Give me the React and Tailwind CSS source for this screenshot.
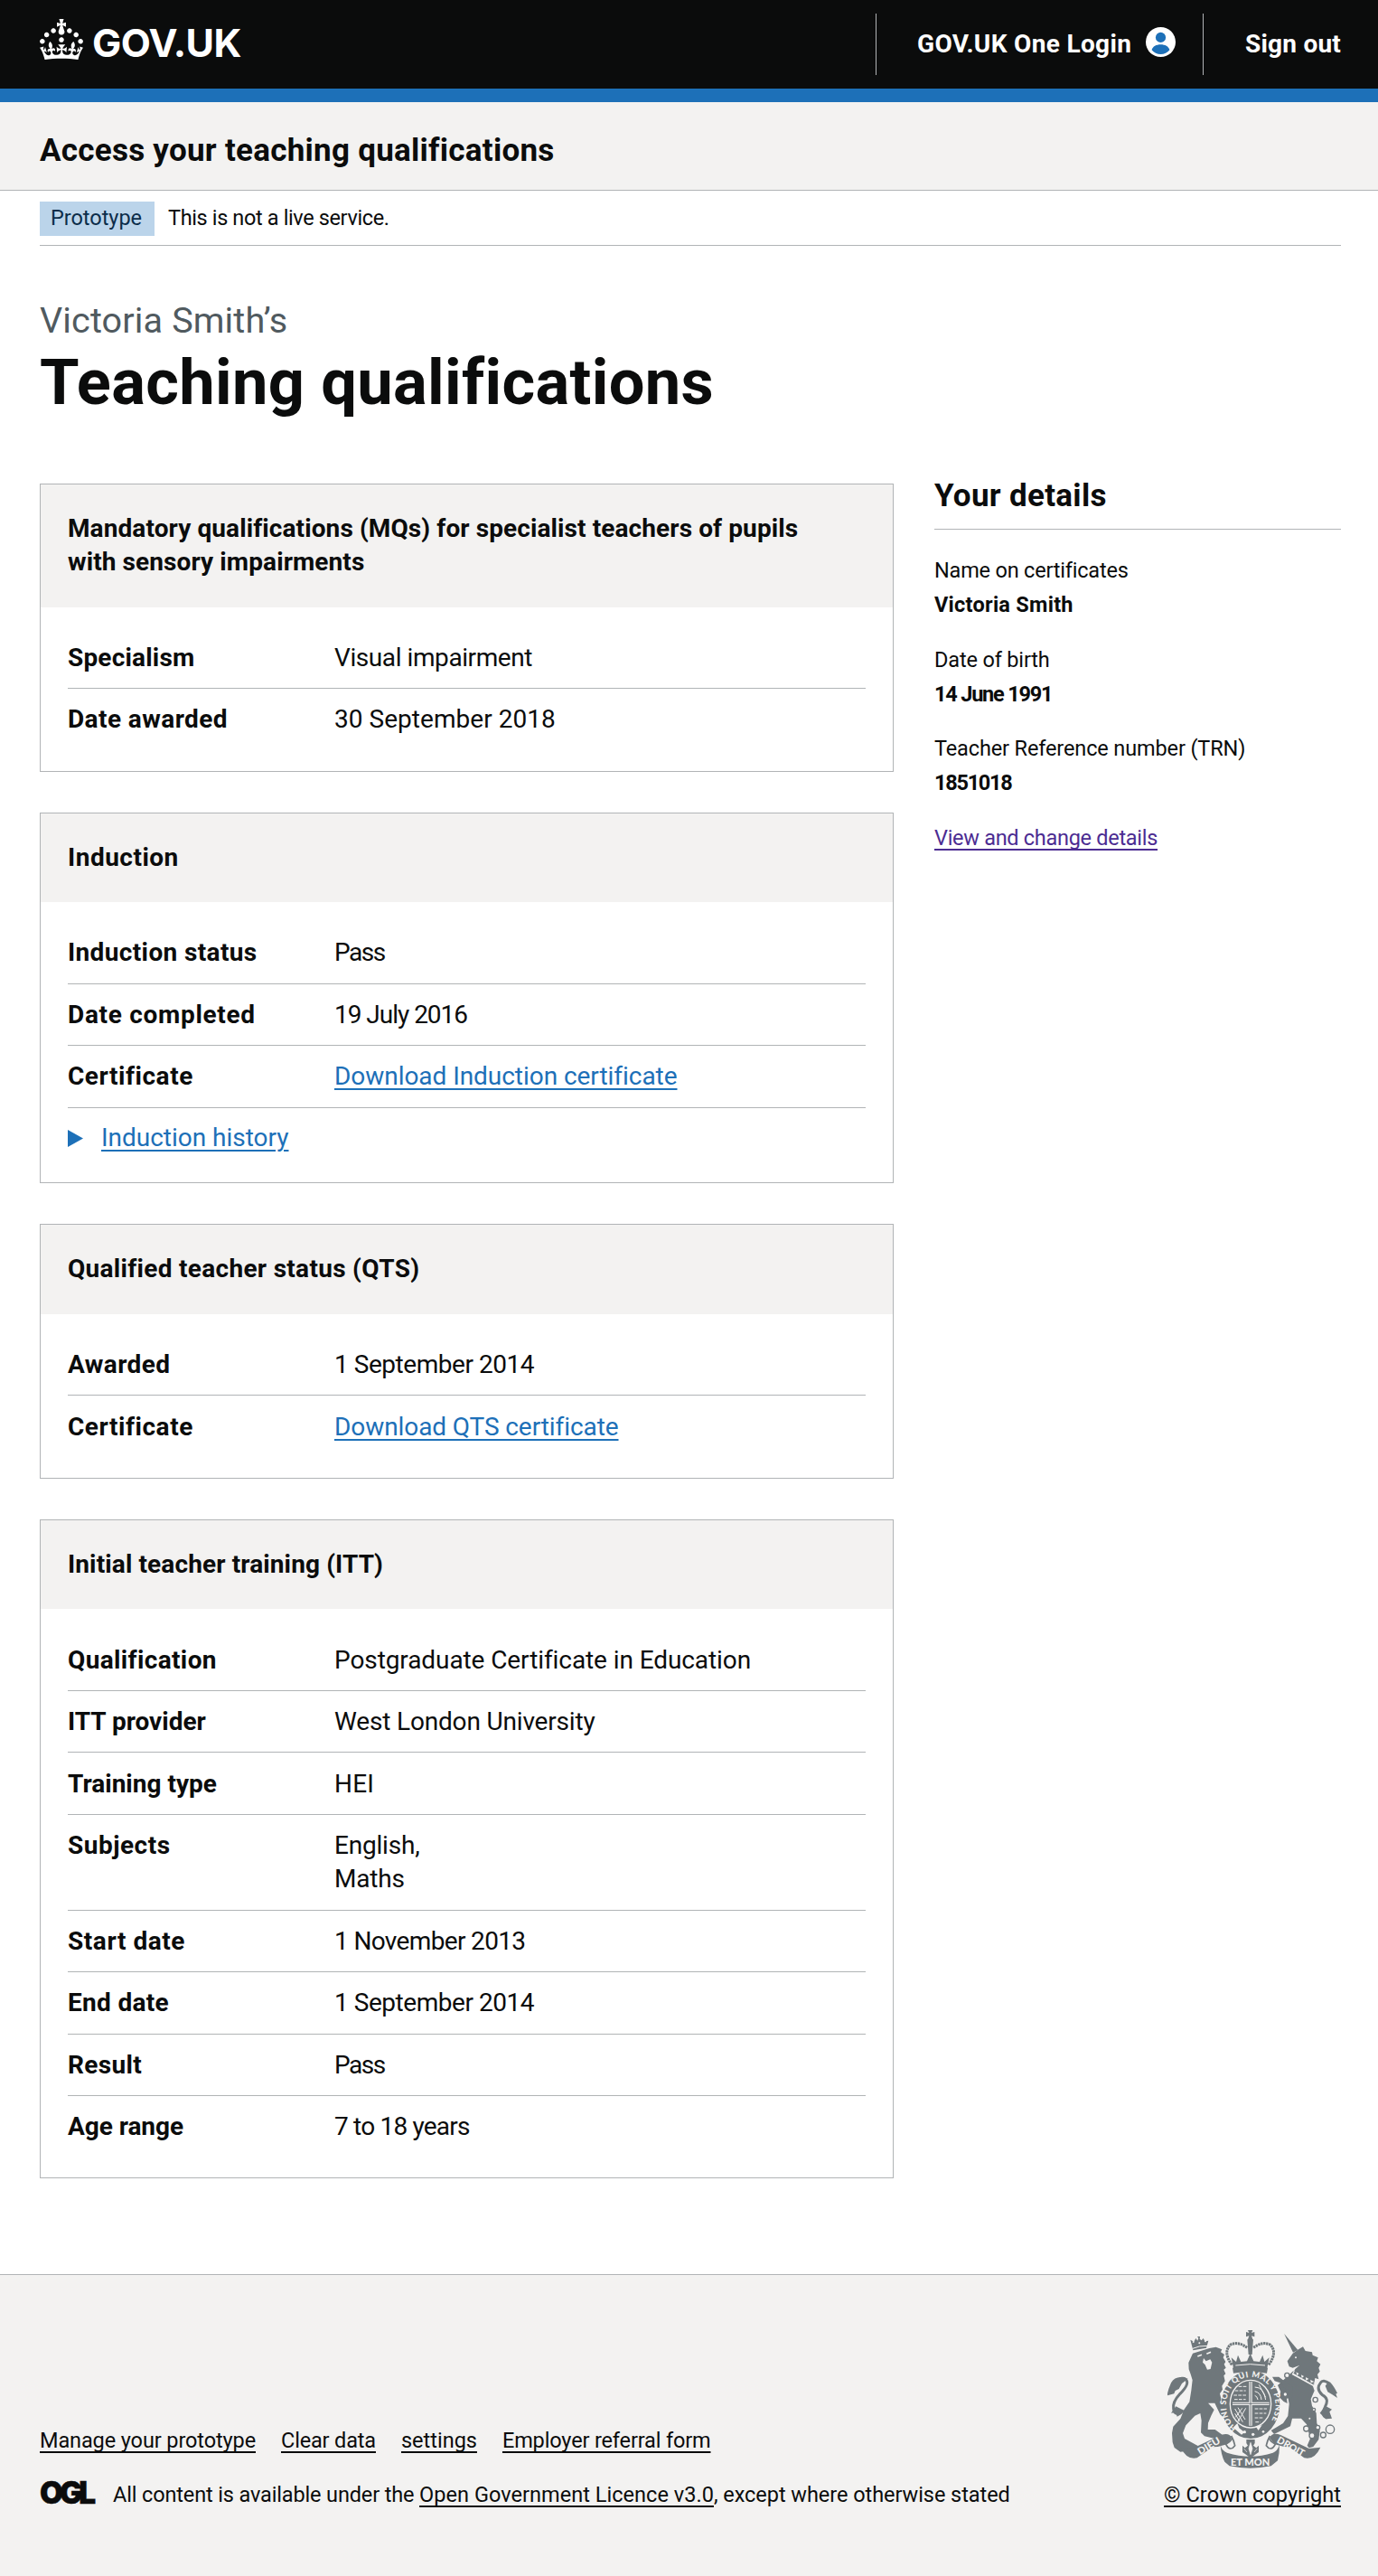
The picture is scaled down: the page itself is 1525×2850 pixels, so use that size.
const LINK = 'text-[#1d70b8] underline decoration-2 underline-offset-[4px]';
const FOOT_LINK = 'underline decoration-2 underline-offset-[4px] [text-decoration-skip-ink:none]';

const CARDS = [
  {
    title: (
      <>
        <span className="tracking-[0.1px]">Mandatory qualifications (MQs) for specialist teachers of pupils</span>
        <br />
        <span className="tracking-[0.1px]">with sensory impairments</span>
      </>
    ),
    rows: [
      ['Specialism', 'tracking-[0.19px]', 'Visual impairment', 'tracking-[-0.42px]'],
      ['Date awarded', 'tracking-[0.42px]', '30 September 2018', 'tracking-[0.04px]'],
    ],
  },
  {
    title: <span className="tracking-[0.5px]">Induction</span>,
    rows: [
      ['Induction status', 'tracking-[0.37px]', 'Pass', 'tracking-[-1.5px]'],
      ['Date completed', 'tracking-[0.7px]', '19 July 2016', 'tracking-[-1.02px]'],
      ['Certificate', 'tracking-[0.54px]', 'Download Induction certificate', 'tracking-[-0.05px]', true],
    ],
    history: true,
  },
  {
    title: <span className="tracking-[0.3px]">Qualified teacher status (QTS)</span>,
    rows: [
      ['Awarded', 'tracking-[0.42px]', '1 September 2014', 'tracking-[-0.46px]'],
      ['Certificate', 'tracking-[0.54px]', 'Download QTS certificate', 'tracking-[-0.08px]', true],
    ],
  },
  {
    title: <span className="tracking-[0.12px]">Initial teacher training (ITT)</span>,
    rows: [
      ['Qualification', 'tracking-[0.36px]', 'Postgraduate Certificate in Education', 'tracking-[-0.09px]'],
      ['ITT provider', 'tracking-[0px]', 'West London University', 'tracking-[-0.17px]'],
      ['Training type', 'tracking-[0.01px]', 'HEI', 'tracking-[0.17px]'],
      ['Subjects', 'tracking-[0.5px]', 'English,\nMaths', 'tracking-[-0.2px]'],
      ['Start date', 'tracking-[0.56px]', '1 November 2013', 'tracking-[-0.65px]'],
      ['End date', 'tracking-[0.31px]', '1 September 2014', 'tracking-[-0.46px]'],
      ['Result', 'tracking-[0.33px]', 'Pass', 'tracking-[-1.5px]'],
      ['Age range', 'tracking-[-0.05px]', '7 to 18 years', 'tracking-[-0.8px]'],
    ],
  },
];

const DETAILS = [
  ['Name on certificates', 'tracking-[-0.2px]', 'Victoria Smith', 'tracking-[0.26px]'],
  ['Date of birth', 'tracking-[-0.16px]', '14 June 1991', 'tracking-[-1.2px]'],
  ['Teacher Reference number (TRN)', 'tracking-[-0.13px]', '1851018', 'tracking-[-1.27px]'],
];

function Crown() {
  return (
    <svg viewBox="0 0 32 30" className="h-[45px] w-12 shrink-0" fill="currentColor">
      <path d="M22.6 10.4c-1 .4-2-.1-2.4-1-.4-.9.1-2 1-2.4.9-.4 2 .1 2.4 1s-.1 2-1 2.4m-5.9 6.7c-.9.4-2-.1-2.4-1-.4-.9.1-2 1-2.4.9-.4 2 .1 2.4 1s-.1 2-1 2.4m10.8-3.7c-1 .4-2-.1-2.4-1-.4-.9.1-2 1-2.4.9-.4 2 .1 2.4 1s0 2-1 2.4m3.3 4.8c-1 .4-2-.1-2.4-1-.4-.9.1-2 1-2.4.9-.4 2 .1 2.4 1s-.1 2-1 2.4M17 4.7l2.3 1.2V2.5l-2.3.7-.2-.2.9-3h-3.4l.9 3-.2.2c-.1.1-2.3-.7-2.3-.7v3.4L15 4.7c.1.1.1.2.2.2l-1.3 4c-.1.2-.1.4-.1.6 0 1.1.8 2 1.9 2.2h.7c1-.2 1.9-1.1 1.9-2.1 0-.2 0-.4-.1-.6l-1.3-4c-.1-.2 0-.2.1-.3m-7.6 5.7c.9.4 2-.1 2.4-1 .4-.9-.1-2-1-2.4-.9-.4-2 .1-2.4 1s0 2 1 2.4m-5 3c.9.4 2-.1 2.4-1 .4-.9-.1-2-1-2.4-.9-.4-2 .1-2.4 1s.1 2 1 2.4m-3.2 4.8c.9.4 2-.1 2.4-1 .4-.9-.1-2-1-2.4-.9-.4-2 .1-2.4 1s0 2 1 2.4m14.8 11c4.4 0 8.6.3 12.3.8 1.1-4.5 2.4-7 3.7-8.8l-2.5-.9c.2 1.3.3 1.9 0 2.7-.4-.4-.8-1.1-1.1-2.3l-1.2 4c.7-.5 1.3-.8 2-.9-1.1 2.5-2.6 3.1-3.5 3-1.1-.2-1.7-1.2-1.5-2.1.3-1.2 1.5-1.5 2.1-.1 1.1-2.3-.8-3-2-2.3 1.9-1.9 2.1-3.5.6-5.6-2.1 1.6-2.1 3.2-1.2 5.5-1.2-1.4-3.2-.6-2.5 1.6.9-1.4 2.1-.5 1.9.8-.2 1.1-1.7 2.1-3.5 1.9-2.7-.2-2.9-2.1-2.9-3.6.7-.1 1.9.5 2.9 1.9l.4-4.3c-1.1 1.1-2.1 1.4-3.2 1.4.4-1.2 2.1-3 2.1-3h-5.4s1.7 1.9 2.1 3c-1.1 0-2.1-.2-3.2-1.4l.4 4.3c1-1.4 2.2-2 2.9-1.9-.1 1.5-.2 3.4-2.9 3.6-1.9.2-3.4-.8-3.5-1.9-.2-1.3 1-2.2 1.9-.8.7-2.3-1.2-3-2.5-1.6.9-2.2.9-3.9-1.2-5.5-1.5 2-1.3 3.7.6 5.6-1.2-.7-3.1 0-2 2.3.6-1.4 1.8-1.1 2.1.1.2.9-.3 1.9-1.5 2.1-.9.2-2.4-.5-3.5-3 .6 0 1.2.3 2 .9l-1.2-4c-.3 1.1-.7 1.9-1.1 2.3-.3-.8-.2-1.4 0-2.7l-2.9.9C1.3 23 2.6 25.5 3.7 30c3.7-.5 7.9-.8 12.3-.8" />
    </svg>
  );
}

function UserIcon() {
  return (
    <svg viewBox="0 0 33 33" className="size-[33px] shrink-0">
      <circle cx="16.5" cy="16.5" r="16.5" fill="#fff" />
      <circle cx="16.5" cy="11.4" r="5.6" fill="#1d70b8" />
      <path d="M6.6 25.2c1.2-3.8 4.9-5.9 9.9-5.9s8.700 2.100 9.900 5.900c-2.500 3-5.900 4.700-9.900 4.700s-7.400-1.700-9.900-4.700z" fill="#1d70b8" />
    </svg>
  );
}

function RoyalArms() {
  const bg = '#f3f2f1';
  const ink = '#6f777b';
  return (
    <svg viewBox="66 81 564 459" className="h-[153px] w-[188px]" fill={ink} fontFamily="Lato, sans-serif" fontWeight="900">
      {/* lion */}
      <path d="M142 113l12 6 6-11 6 8 3-9-4-5 9 0-1 8 6 5 6-7 5 10 12-2-7 24-44 8z" />
      <path d="M150 158l55-17 22-4 20 8-4 9 12 8-4 10 8 14-5 8 6 12-7 6 6 14-6 6 4 18-10 16 2 12-9 14 4 16 2 22 17 25-8 18-14-12-18-38-22 0 20 22-10 20-10 24-1 22 24 0 30 22-3 10-28-2-34-8-12-12 2-40-4-24-18 8-30 32-10 26 6 18 22 12 22 12-8 22-20-6-30 4-20-14-6-18-2-30 4-22 24-26 12-30 18-26 6-38 4-34-6-20-6-16-1-22z" />
      <path d="M118 348q-28 22-32-6-4-22 22-50 32-32 20-46-10-14-36 8" fill="none" stroke={ink} strokeWidth="9" />
      <path d="M134 242q-40-14-56 14l-8 20-6 22 24-6 4-10 12-6 10-18zM94 334l-16 22 16-2 4 14 14-8 10-12z" />
      <path d="M166 168l14-5M196 160l14-6" stroke={bg} strokeWidth="5" />
      <path d="M186 174l8 10 14-6 6 10-5 22-11 2-7-16-8-8z" fill={bg} />
      <circle cx="152" cy="120" r="3" fill={bg} /><circle cx="172" cy="124" r="3" fill={bg} /><circle cx="192" cy="118" r="3" fill={bg} />
      <path d="M150 142q20-10 50-9" stroke={bg} strokeWidth="3" fill="none" />
      {/* unicorn */}
      <path d="M453 92l46 55-16 8z" />
      <path d="M464 184l18-26 20-14 14-8 8 14 22 4 2 10 18 8-4 12 12 10-6 12 4 12-8 10 4 16-12-4-4 24-54-28-14-14 6-12 14-12-22 8-12-4z" />
      <path d="M484 216l62 42 8 24-12 28 4 22 14 24 2 34 10 24-4 30-18 24-14 4-6-8 10-24-12-46-18-20-30 0-6 26-54 26-10-12 40-24 16-24 4-40-4-22-22-14-12-26z" />
      <path d="M480 268l-26-18-18-14-22 0 8 14 18 6 20 22-18 8-6 16 16 16 12 6-2-16 20-4z" />
      <path d="M596 372q-22-6-6-38 14-26-10-38-22-20-6-40 8-14 30 2 10 10 22 34" fill="none" stroke={ink} strokeWidth="9" />
      <path d="M600 252l18 22 12 32-18-12-14-8-8-20zM590 332l22 12-8 8 8 22-20 2-20-20z" />
      <path d="M482 222l70 38" stroke={bg} strokeWidth="14" />
      <path d="M484 224l8-10 4 18 12-12 4 20 12-10 2 18 14-8 2 16 12-4-4 10z" />
      <circle cx="492" cy="172" r="3" fill={bg} />
      <g fill={bg} stroke={ink} strokeWidth="4">
        <circle cx="463" cy="231" r="8" /><circle cx="457" cy="294" r="7" /><circle cx="557" cy="312" r="8" />
        <circle cx="552" cy="345" r="5" /><circle cx="538" cy="374" r="5" /><circle cx="527" cy="408" r="9" />
        <circle cx="546" cy="431" r="9" /><circle cx="583" cy="429" r="9" /><circle cx="606" cy="410" r="14" />
        <circle cx="565" cy="404" r="7" />
      </g>
      {/* crown */}
      <path d="M333 81h16l-4 9 10-3v16l-10-3 4 12h-16l4-12-10 3V87l10 3zM331 112h20l-4 50h-12z" />
      <path d="M280 196q-30-40-6-66 26-14 58 10M402 196q30-40 6-66-26-14-58 10" fill="none" stroke={ink} strokeWidth="9" strokeDasharray="7 2" />
      <path d="M278 172l16 14 6-22 10 22 20-2 11-26 11 26 20 2 10-22 6 22 16-14-8 40q-55-10-110 0z" />
      <path d="M292 198q49-8 98 0" fill="none" stroke={bg} strokeWidth="3" />
      <path d="M282 206q58-12 117 0l-3 18q-55-10-111 0z" />
      {/* garter and shield */}
      <ellipse cx="342" cy="328" rx="97" ry="113" />
      <ellipse cx="342" cy="326" rx="68" ry="79" fill={ink} stroke={bg} strokeWidth="4" />
      <g fill="none" stroke={bg} strokeWidth="3">
        <path d="M342 252v146M282 325h122" strokeWidth="10" />
        <path d="M290 282h36M286 297h42M288 311h38M302 268h26" strokeDasharray="11 4" />
        <path d="M356 270q30 0 36 42M356 284q20 4 22 28M356 298q8 2 10 14M370 262l22 42" />
        <path d="M290 342l26 44M300 338l24 40M290 358l16 26M326 340l-26 44M314 340l-22 30" />
        <path d="M356 342h40M356 357h38M356 372h30M358 386h16" strokeDasharray="11 4" />
      </g>
      <path d="M342 252v146M282 325h122" stroke={ink} strokeWidth="3" />
      <path id="garter" d="M296 406A82 93 0 1 1 392 404" fill="none" />
      <text fontSize="27" fill={bg} textLength="414" lengthAdjust="spacing">
        <textPath href="#garter">HONI SOIT QUI MAL Y PENSE</textPath>
      </text>
      <g fill={bg}>
        <path d="M284 404l14-14 6 16 18 14-10 8zM360 402l20-6-12 18z" />
        <circle cx="322" cy="419" r="5" /><circle cx="350" cy="427" r="5" /><circle cx="384" cy="418" r="4" />
      </g>
      {/* fleur-de-lis pendant */}
      <path d="M328 444h28v12l-5 8 10 8 8-8v22l-12 8-15 12-15-12-12-8v-22l8 8 10-8-5-8z" />
      <path d="M342 454l-6 20 6 20 6-20zM320 474l10 12M364 474l-10 12" fill={bg} stroke={bg} strokeWidth="2" />
      {/* motto ribbon */}
      <path d="M110 470l38 4 96-45q28-8 34 8-2 14-20 24-24 8-42 8l-52 36q-34 8-54-35z" />
      <path d="M574 470l-38 4-94-45q-28-10-36 8 4 14 22 24 24 8 42 8l50 36q34 8 54-35z" />
      <path d="M242 462q4 20 22 26 78 24 152 0 14-4 22-26 0 30-6 52l-22 18q-70 14-138 0l-16-14q-12-22-14-56z" />
      <path d="M278 432q8 14-18 28 14 26 30 4-4-18-12-32M406 432q-8 14 18 28-14 26-30 4 4-18 12-32" fill={bg} stroke={ink} strokeWidth="5" />
      <g fill={bg} fontSize="32">
        <text transform="translate(174 496) rotate(-31)" textLength="82" lengthAdjust="spacingAndGlyphs">DIEU</text>
        <text x="276" y="532" textLength="130" lengthAdjust="spacingAndGlyphs">ET MON</text>
        <text transform="translate(427 452) rotate(30)" textLength="100" lengthAdjust="spacingAndGlyphs">DROIT</text>
      </g>
    </svg>
  );
}

function Card({ card }) {
  return (
    <section className="border border-[#b1b4b6] text-[28px] leading-[37.3px]">
      <h2 className="bg-[#f3f2f1] px-[30px] pt-[30px] pb-[31px] font-bold whitespace-nowrap">{card.title}</h2>
      <dl className={card.history ? 'px-[30px] pt-[22.2px] pb-[30.5px]' : 'px-[30px] pt-[22.2px] pb-[22.8px]'}>
        {card.rows.map(([key, keyCls, value, valueCls, link], i) => (
          <div
            key={key}
            className={
              i < card.rows.length - 1 || card.history
                ? 'flex border-b border-[#b1b4b6] pt-[15.2px] pb-[15px]'
                : 'flex pt-[15.2px] pb-[15px]'
            }
          >
            <dt className={`w-[295px] shrink-0 font-bold ${keyCls}`}>{key}</dt>
            <dd className={`whitespace-pre-line ${valueCls}`}>
              {link ? <a className={LINK}>{value}</a> : value}
            </dd>
          </div>
        ))}
        {card.history && (
          <div className="flex items-center gap-5 pt-[14.8px]">
            <svg viewBox="0 0 17 19" className="h-[19px] w-[17px]" fill="#1d70b8">
              <path d="M0 0l17 9.500L0 19z" />
            </svg>
            <a className={`${LINK} tracking-[-0.02px]`}>Induction history</a>
          </div>
        )}
      </dl>
    </section>
  );
}

export default function App() {
  return (
    <div className="min-h-[2850px] bg-white font-[Roboto,sans-serif] text-[#0b0c0c]">
      <header>
        <div className="flex h-[98px] items-center justify-between bg-[#0b0c0c] pr-[41px] pl-11 text-white">
          <a className="flex items-center gap-[10px] pb-[11px]">
            <Crown />
            <span className="pt-[7px] font-[Inter,sans-serif] text-[43px] leading-[44px] font-bold tracking-[-0.6px]">GOV.UK</span>
          </a>
          <nav className="flex text-[28px] font-bold whitespace-nowrap">
            <a className="flex h-[68px] items-center border-l border-[#b1b4b6] pl-[45px]">
              <span className="w-[253px] tracking-[0.33px]">GOV.UK One Login</span>
              <span className="w-[63px] pb-[5px]"><UserIcon /></span>
            </a>
            <a className="flex h-[68px] w-[153px] items-center border-l border-[#b1b4b6] pl-[46px] tracking-[0.22px]">Sign out</a>
          </nav>
        </div>
        <div className="h-[15px] bg-[#1d70b8]" />
        <div className="flex h-[98px] items-center border-b border-[#b1b4b6] bg-[#f3f2f1] px-11 pt-[11px]">
          <span className="text-[35px] font-bold tracking-[0.26px]">Access your teaching qualifications</span>
        </div>
      </header>

      <div className="mr-[41px] ml-11 flex h-[61px] gap-[15px] border-b border-[#b1b4b6] pt-3 text-[23.5px] leading-[36.5px]">
        <strong className="h-[38px] w-[127px] bg-[#bbd4ea] pl-3 font-normal tracking-[-0.03px] text-[#0c2d4a]">Prototype</strong>
        <span className="tracking-[-0.37px]">This is not a live service.</span>
      </div>

      <main className="h-[2244px] pt-[60px] pr-[41px] pl-11">
        <span className="block text-[39.6px] leading-[45px] tracking-[0.12px] text-[#505a5f]">Victoria Smith’s</span>
        <h1 className="mt-[10px] text-[70.4px] leading-[73px] font-bold tracking-[0.35px]">Teaching qualifications</h1>
        <div className="mt-[75px] flex items-start gap-[45px]">
          <div className="flex w-[945px] shrink-0 flex-col gap-[45.2px]">
            {CARDS.map((card, i) => (
              <Card key={i} card={card} />
            ))}
          </div>
          <aside className="-mt-[8px] w-[450px] text-[23.5px] leading-[38px]">
            <h2 className="h-[59px] border-b border-[#b1b4b6] text-[35px] leading-[44px] font-bold tracking-[0.3px]">Your details</h2>
            <div className="mt-[26px] flex flex-col gap-[22.5px]">
              {DETAILS.map(([label, labelCls, value, valueCls]) => (
                <div key={label}>
                  <div className={labelCls}>{label}</div>
                  <div className={`font-bold ${valueCls}`}>{value}</div>
                </div>
              ))}
              <a className="self-start tracking-[-0.29px] text-[#4c2c92] underline decoration-2 underline-offset-[4px] [text-decoration-skip-ink:none]">View and change details</a>
            </div>
          </aside>
        </div>
      </main>

      <footer className="flex h-[334px] items-end justify-between border-t border-[#b1b4b6] bg-[#f3f2f1] pr-[41px] pl-11 pb-[71.5px] text-[23.5px] leading-[37px] whitespace-nowrap">
        <div>
          <div className="flex gap-7">
            <a className={`${FOOT_LINK} tracking-[-0.11px]`}>Manage your prototype</a>
            <a className={`${FOOT_LINK} tracking-[-0.16px]`}>Clear data</a>
            <a className={FOOT_LINK}>settings</a>
            <a className={`${FOOT_LINK} tracking-[-0.15px]`}>Employer referral form</a>
          </div>
          <div className="mt-[23px] flex">
            <span className="-mt-[2px] w-[81px] font-[Inter,sans-serif] text-[33.500px] font-black tracking-[-4px] [-webkit-text-stroke:0.4px_#0b0c0c]">OGL</span>
            <span>
              <span className="tracking-[-0.14px]">All content is available under the </span>
              <a className={`${FOOT_LINK} tracking-[0.04px]`}>Open Government Licence v3.0</a>
              <span className="tracking-[-0.05px]">, except where otherwise stated</span>
            </span>
          </div>
        </div>
        <div className="flex flex-col items-end">
          <div className="mr-1"><RoyalArms /></div>
          <a className={`${FOOT_LINK} mt-[11px] tracking-[0.08px]`}>© Crown copyright</a>
        </div>
      </footer>
    </div>
  );
}
